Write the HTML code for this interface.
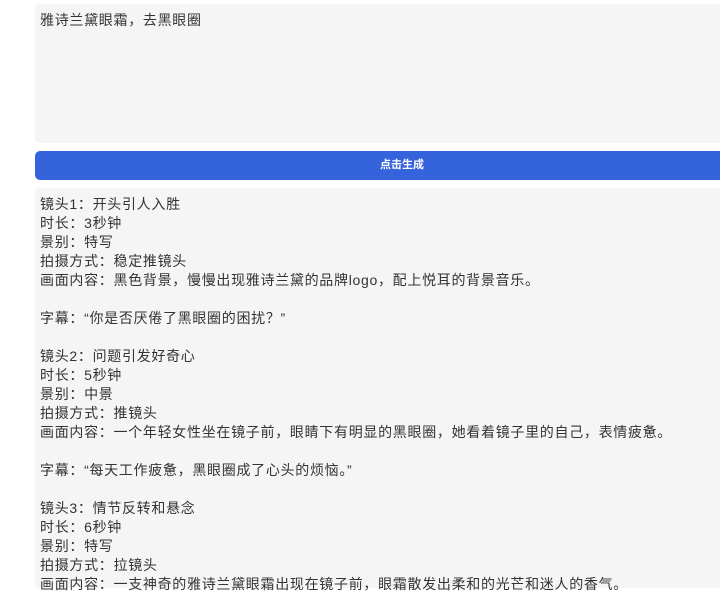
<!DOCTYPE html>
<html><head><meta charset="utf-8"><style>
body{margin:0;background:#fff;width:720px;height:581px;overflow:hidden;font-family:"Liberation Sans","Noto Sans CJK SC",sans-serif;color:#333;}
.ta{position:absolute;left:35px;top:4px;width:700px;height:139px;background:#f5f5f5;border-radius:4px;}
.ta div{padding:7px 5px;font-size:14px;line-height:19px;letter-spacing:0.7px;}
.btn{position:absolute;left:35px;top:151px;width:700px;height:29px;background:#3563dc;border-radius:5px;color:#fff;font-size:11px;line-height:29px;font-weight:bold;}
.btn span{position:absolute;left:345px;}
.out{position:absolute;left:35px;top:188px;width:700px;height:400px;background:#f5f5f5;border-radius:4px;}
.out div{padding:7px 5px;font-size:14px;line-height:19px;white-space:pre;letter-spacing:0.7px;}
</style></head><body>
<div class="ta"><div>雅诗兰黛眼霜，去黑眼圈</div></div>
<div class="btn"><span>点击生成</span></div>
<div class="out"><div>镜头1：开头引人入胜
时长：3秒钟
景别：特写
拍摄方式：稳定推镜头
画面内容：黑色背景，慢慢出现雅诗兰黛的品牌logo，配上悦耳的背景音乐。

字幕：“你是否厌倦了黑眼圈的困扰？”

镜头2：问题引发好奇心
时长：5秒钟
景别：中景
拍摄方式：推镜头
画面内容：一个年轻女性坐在镜子前，眼睛下有明显的黑眼圈，她看着镜子里的自己，表情疲惫。

字幕：“每天工作疲惫，黑眼圈成了心头的烦恼。”

镜头3：情节反转和悬念
时长：6秒钟
景别：特写
拍摄方式：拉镜头
画面内容：一支神奇的雅诗兰黛眼霜出现在镜子前，眼霜散发出柔和的光芒和迷人的香气。</div></div>
</body></html>
